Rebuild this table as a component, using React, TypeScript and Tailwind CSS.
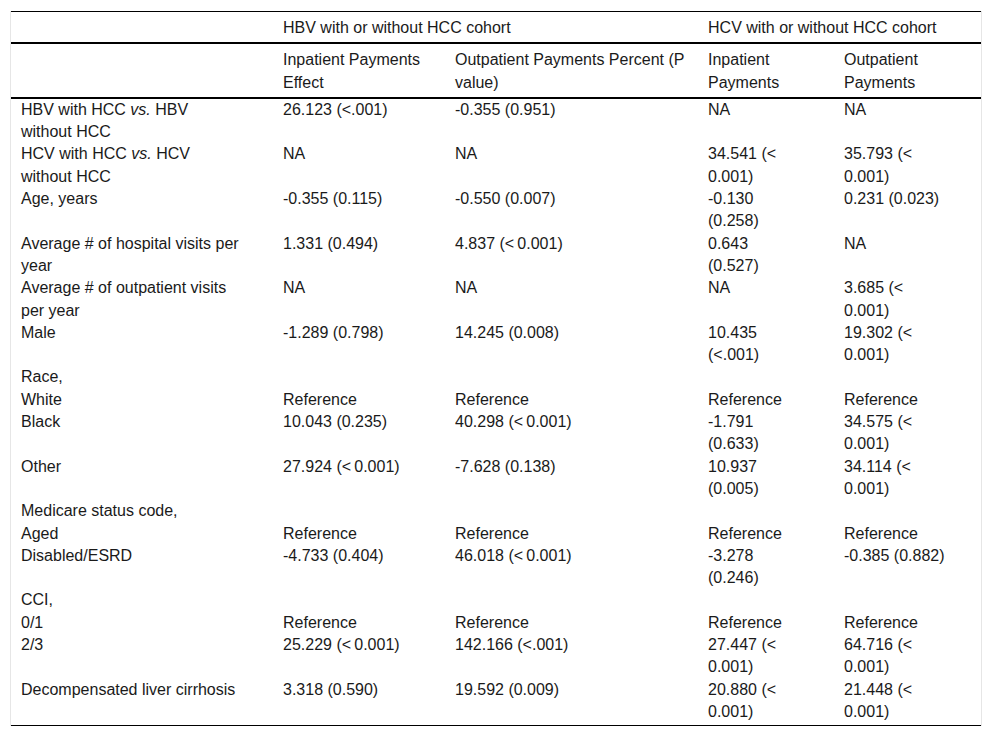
import React from "react";

type Row = { label: React.ReactNode; cells: string[] };

const T = "\u2009";

const rows: Row[] = [
  { label: <>HBV with HCC <i>vs.</i> HBV without HCC</>, cells: ["26.123 (<.001)", "-0.355 (0.951)", "NA", "NA"] },
  { label: <>HCV with HCC <i>vs.</i> HCV without HCC</>, cells: ["NA", "NA", `34.541 (<${T}0.001)`, `35.793 (<${T}0.001)`] },
  { label: "Age, years", cells: ["-0.355 (0.115)", "-0.550 (0.007)", "-0.130 (0.258)", "0.231 (0.023)"] },
  { label: "Average # of hospital visits per year", cells: ["1.331 (0.494)", `4.837 (<${T}0.001)`, "0.643 (0.527)", "NA"] },
  { label: "Average # of outpatient visits per year", cells: ["NA", "NA", "NA", `3.685 (<${T}0.001)`] },
  { label: "Male", cells: ["-1.289 (0.798)", "14.245 (0.008)", "10.435 (<.001)", `19.302 (<${T}0.001)`] },
  { label: "Race,", cells: ["", "", "", ""] },
  { label: "White", cells: ["Reference", "Reference", "Reference", "Reference"] },
  { label: "Black", cells: ["10.043 (0.235)", `40.298 (<${T}0.001)`, "-1.791 (0.633)", `34.575 (<${T}0.001)`] },
  { label: "Other", cells: [`27.924 (<${T}0.001)`, "-7.628 (0.138)", "10.937 (0.005)", `34.114 (<${T}0.001)`] },
  { label: "Medicare status code,", cells: ["", "", "", ""] },
  { label: "Aged", cells: ["Reference", "Reference", "Reference", "Reference"] },
  { label: "Disabled/ESRD", cells: ["-4.733 (0.404)", `46.018 (<${T}0.001)`, "-3.278 (0.246)", "-0.385 (0.882)"] },
  { label: "CCI,", cells: ["", "", "", ""] },
  { label: "0/1", cells: ["Reference", "Reference", "Reference", "Reference"] },
  { label: "2/3", cells: [`25.229 (<${T}0.001)`, "142.166 (<.001)", `27.447 (<${T}0.001)`, `64.716 (<${T}0.001)`] },
  { label: "Decompensated liver cirrhosis", cells: ["3.318 (0.590)", "19.592 (0.009)", `20.880 (<${T}0.001)`, `21.448 (<${T}0.001)`] },
];

const pad = [
  "pl-[10px] pr-[32px]",
  "pl-[10px] pr-[10px]",
  "pl-[10px] pr-[10px]",
  "pl-[10px] pr-[40px]",
  "pl-[10px] pr-[34px]",
];

export default function App() {
  return (
    <div className="min-h-[738px] bg-white pt-[11px] font-['Liberation_Sans',Arial,sans-serif] text-[16px] leading-[22.3px] text-[#1a1a1a]">
      <div className="ml-[10px] w-[972px] border-x border-[#e6e6e6]">
        <table className="w-[970px] table-fixed border-collapse text-left">
          <colgroup>
            <col className="w-[262px]" />
            <col className="w-[172px]" />
            <col className="w-[253px]" />
            <col className="w-[136px]" />
            <col className="w-[147px]" />
          </colgroup>
          <thead>
            <tr className="border-t border-b-2 border-t-black border-b-black">
              <th className={`${pad[0]} pt-[5px] pb-[3px] align-top font-normal`}></th>
              <th colSpan={2} className={`${pad[1]} pt-[5px] pb-[3px] align-top font-normal`}>
                HBV with or without HCC cohort
              </th>
              <th colSpan={2} className={`${pad[3]} pt-[5px] pb-[3px] align-top font-normal whitespace-nowrap`}>
                HCV with or without HCC cohort
              </th>
            </tr>
            <tr className="border-b-2 border-b-black">
              <th className={`${pad[0]} pt-[5px] pb-[3px] align-top font-normal`}></th>
              <th className={`${pad[1]} pt-[5px] pb-[3px] align-top font-normal`}>Inpatient Payments Effect</th>
              <th className={`${pad[2]} pt-[5px] pb-[3px] align-top font-normal`}>Outpatient Payments Percent (P value)</th>
              <th className={`${pad[3]} pt-[5px] pb-[3px] align-top font-normal`}>Inpatient Payments</th>
              <th className={`${pad[4]} pt-[5px] pb-[3px] align-top font-normal`}>Outpatient Payments</th>
            </tr>
          </thead>
          <tbody className="border-b border-b-black">
            {rows.map((r, i) => {
              const last = i === rows.length - 1;
              const py = last ? "pt-0 pb-[2px]" : "py-0";
              return (
                <tr key={i}>
                  <td className={`${pad[0]} ${py} align-top`}>{r.label}</td>
                  {r.cells.map((c, j) => (
                    <td key={j} className={`${pad[j + 1]} ${py} align-top`}>
                      {c}
                    </td>
                  ))}
                </tr>
              );
            })}
          </tbody>
        </table>
      </div>
    </div>
  );
}
